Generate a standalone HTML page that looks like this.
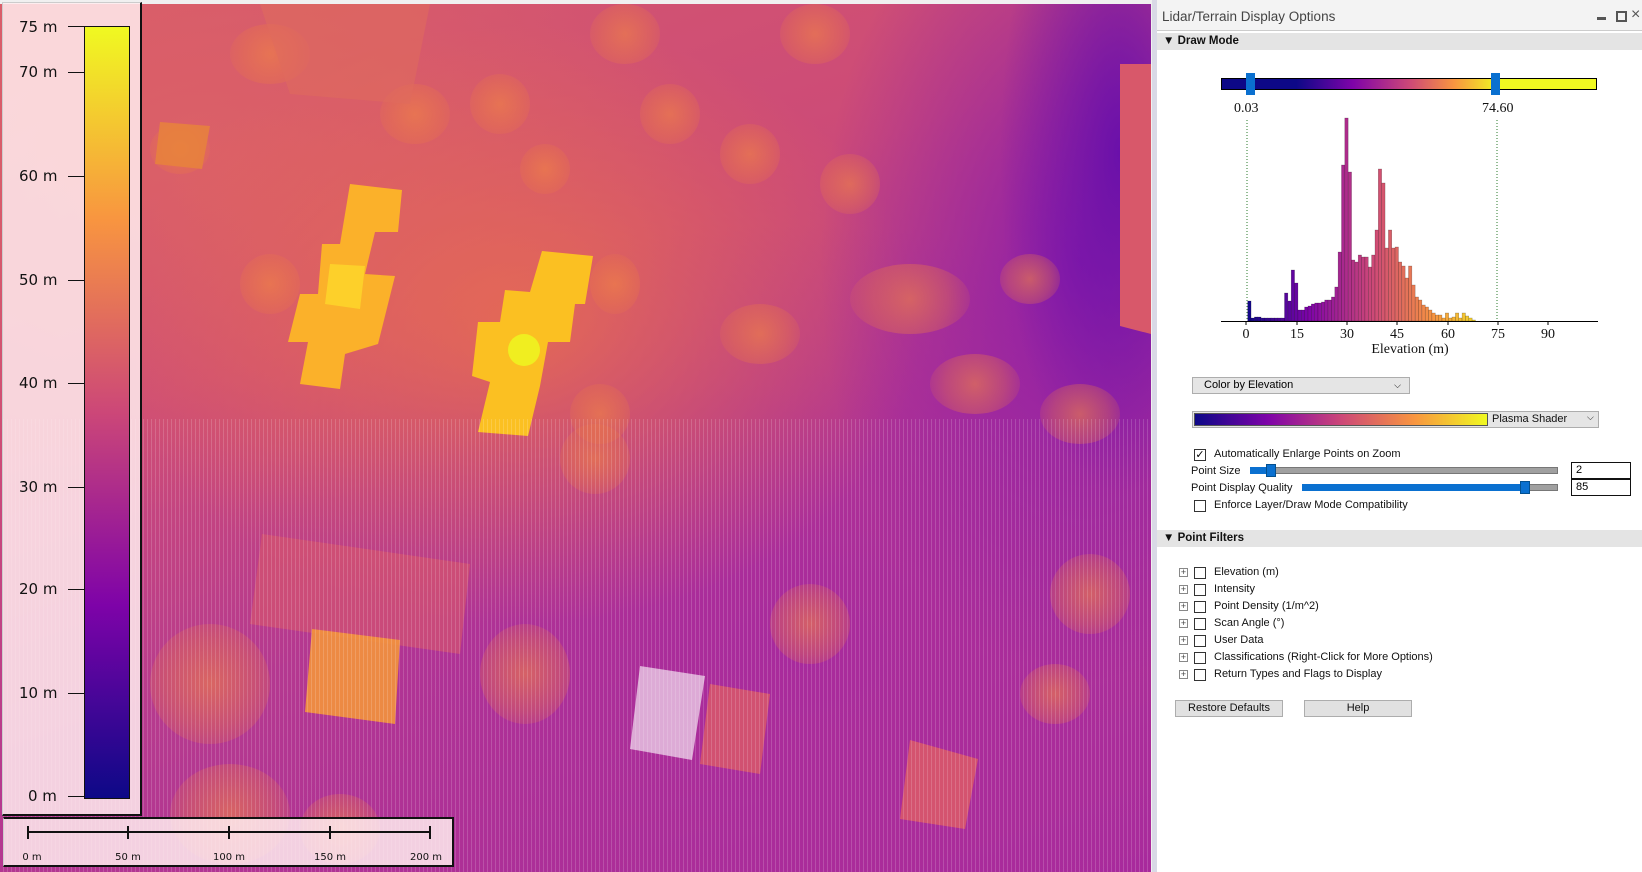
<!DOCTYPE html>
<html><head><meta charset="utf-8"><style>
*{margin:0;padding:0;box-sizing:border-box}
body{width:1642px;height:872px;overflow:hidden;background:#f0f0f0;font-family:"Liberation Sans",sans-serif;position:relative}
.abs{position:absolute}
#map{left:0;top:4px;width:1151px;height:868px;overflow:hidden;
background:
radial-gradient(ellipse 120px 340px at 1120px 150px,#6a10aa 0%,rgba(106,16,170,0) 100%),
radial-gradient(ellipse 260px 420px at 1080px 260px,#8e1ea8 0%,rgba(142,30,168,0) 100%),
radial-gradient(ellipse 400px 300px at 520px 320px,rgba(232,110,80,.85) 0%,rgba(232,110,80,0) 100%),
radial-gradient(ellipse 500px 360px at 200px 150px,rgba(222,100,100,.8) 0%,rgba(222,100,100,0) 100%),
radial-gradient(ellipse 600px 420px at 800px 640px,#a82a9c 0%,rgba(168,42,156,0) 100%),
linear-gradient(160deg,#d65a6c 0%,#cc4a78 35%,#b63a8e 60%,#a82a9c 100%);}
.tex{left:0;top:415px;width:1151px;height:460px;background:repeating-linear-gradient(90deg,rgba(255,255,255,0) 0 3px,rgba(255,255,255,.16) 3px 4px);}
.blob{position:absolute;border-radius:50%;background:radial-gradient(circle,rgba(240,130,70,.6) 0%,rgba(235,120,70,.35) 55%,rgba(235,120,70,0) 100%)}
.bld{position:absolute}
#legend{left:2px;top:2px;width:140px;height:814px;background:rgba(255,236,238,.85);border:2px solid #111;border-top:1px solid #ccc;border-left:1px solid #ccc}
#scale{left:3px;top:817px;width:451px;height:50px;background:rgba(255,236,238,.85);border:2px solid #111;border-left:1px solid #ccc}
.lab{position:absolute;font-size:15px;color:#111;font-family:"DejaVu Sans",sans-serif}
#panel{left:1152px;top:0;width:490px;height:872px;background:#fff;border-left:5px solid #d9d9e6}
.t12{font-size:11px;color:#111;position:absolute;white-space:nowrap}
.hdr{position:absolute;left:0;width:485px;height:17px;background:#e4e4e4;font-size:11.5px;font-weight:bold;color:#111;padding-left:6px;line-height:17px}
.cb{position:absolute;width:12px;height:12px;border:1px solid #333;background:#fff}
.pl{position:absolute;width:9px;height:9px;border:1px solid #888;font-size:9px;line-height:7px;text-align:center;color:#444}
.btn{position:absolute;height:17px;border:1px solid #adadad;background:#e1e1e1;font-size:11px;text-align:center;line-height:15px;color:#111}
</style></head><body>
<div id="map" class="abs">
 <div class="blob" style="left:150px;top:120px;width:60px;height:50px"></div>
 <div class="blob" style="left:470px;top:70px;width:60px;height:60px"></div>
 <div class="blob" style="left:520px;top:140px;width:50px;height:50px"></div>
 <div class="blob" style="left:590px;top:0px;width:70px;height:60px"></div>
 <div class="blob" style="left:640px;top:80px;width:60px;height:60px"></div>
 <div class="blob" style="left:720px;top:120px;width:60px;height:60px"></div>
 <div class="blob" style="left:780px;top:0px;width:70px;height:60px"></div>
 <div class="blob" style="left:820px;top:150px;width:60px;height:60px"></div>
 <div class="blob" style="left:380px;top:80px;width:70px;height:60px"></div>
 <div class="blob" style="left:230px;top:20px;width:80px;height:60px"></div>
 <div class="blob" style="left:590px;top:250px;width:50px;height:60px"></div>
 <div class="blob" style="left:570px;top:380px;width:60px;height:60px"></div>
 <div class="blob" style="left:560px;top:420px;width:70px;height:70px"></div>
 <div class="blob" style="left:850px;top:260px;width:120px;height:70px"></div>
 <div class="blob" style="left:930px;top:350px;width:90px;height:60px"></div>
 <div class="blob" style="left:1040px;top:380px;width:80px;height:60px"></div>
 <div class="blob" style="left:720px;top:300px;width:80px;height:60px"></div>
 <div class="blob" style="left:150px;top:620px;width:120px;height:120px"></div>
 <div class="blob" style="left:170px;top:760px;width:120px;height:100px"></div>
 <div class="blob" style="left:300px;top:790px;width:80px;height:70px"></div>
 <div class="blob" style="left:480px;top:620px;width:90px;height:100px"></div>
 <div class="blob" style="left:770px;top:580px;width:80px;height:80px"></div>
 <div class="blob" style="left:1050px;top:550px;width:80px;height:80px"></div>
 <div class="blob" style="left:1020px;top:660px;width:70px;height:60px"></div>
 <div class="blob" style="left:240px;top:250px;width:60px;height:60px"></div>
 <div class="blob" style="left:1000px;top:250px;width:60px;height:50px"></div>
 <div class="bld" style="left:0;top:0;width:1151px;height:868px">
 <svg width="1151" height="868" style="position:absolute;left:0;top:0">
  <polygon points="260,0 430,0 410,100 290,90" fill="#e06a5e" opacity=".6"/>
  <polygon points="160,118 210,122 202,165 155,160" fill="#e8833c" opacity=".85"/>
  <polygon points="350,180 402,186 398,228 375,228 365,270 395,272 378,340 345,350 340,385 300,380 308,338 288,338 300,290 318,290 322,240 340,240" fill="#fbb12a"/>
  <polygon points="330,260 365,262 360,305 325,300" fill="#fdd02a"/>
  <polygon points="542,247 593,252 585,300 575,300 570,338 548,338 540,382 528,432 478,428 490,378 472,372 478,318 500,318 505,286 530,288" fill="#fbc022"/>
  <circle cx="524" cy="346" r="16" fill="#f0ee20"/>
  <polygon points="262,530 470,560 460,650 250,620" fill="#d8586a" opacity=".6"/>
  <polygon points="312,625 400,636 395,720 305,708" fill="#f3933c" opacity=".9"/>
  <polygon points="640,662 705,672 692,756 630,745" fill="#ffffff" opacity=".6"/>
  <polygon points="710,680 770,690 760,770 700,760" fill="#d8586a" opacity=".85"/>
  <polygon points="910,736 978,755 965,825 900,815" fill="#d8586a" opacity=".9"/>
  <polygon points="1120,60 1151,60 1151,330 1120,322" fill="#d8586a"/>
 </svg></div>
 <div class="abs tex"></div>
</div>

<div id="legend" class="abs">
 <div class="abs" style="left:81px;top:23px;width:46px;height:773px;border:1px solid #111;background:linear-gradient(180deg,#f0f921 0%,#f89540 25%,#cc4778 50%,#7e03a8 75%,#0d0887 100%)"></div>
</div>
<svg class="abs" style="left:0;top:0" width="150" height="820">
 <g stroke="#111" stroke-width="1">
 <line x1="68" y1="26.5" x2="84" y2="26.5"/><line x1="68" y1="72.5" x2="84" y2="72.5"/><line x1="68" y1="176.5" x2="84" y2="176.5"/><line x1="68" y1="280.5" x2="84" y2="280.5"/><line x1="68" y1="383.5" x2="84" y2="383.5"/><line x1="68" y1="487.5" x2="84" y2="487.5"/><line x1="68" y1="589.5" x2="84" y2="589.5"/><line x1="68" y1="693.5" x2="84" y2="693.5"/><line x1="68" y1="796.5" x2="84" y2="796.5"/>
 </g>
</svg>
<div class="lab" style="left:19px;top:18px">75 m</div>
<div class="lab" style="left:19px;top:63px">70 m</div>
<div class="lab" style="left:19px;top:167px">60 m</div>
<div class="lab" style="left:19px;top:271px">50 m</div>
<div class="lab" style="left:19px;top:374px">40 m</div>
<div class="lab" style="left:19px;top:478px">30 m</div>
<div class="lab" style="left:19px;top:580px">20 m</div>
<div class="lab" style="left:19px;top:684px">10 m</div>
<div class="lab" style="left:28px;top:787px">0 m</div>

<div id="scale" class="abs"></div>
<svg class="abs" style="left:0;top:817px" width="460" height="50">
 <g stroke="#111" stroke-width="2"><line x1="28" y1="15" x2="430" y2="15"/>
 <line x1="28" y1="9" x2="28" y2="22"/><line x1="128" y1="9" x2="128" y2="22"/><line x1="229" y1="9" x2="229" y2="22"/><line x1="330" y1="9" x2="330" y2="22"/><line x1="430" y1="9" x2="430" y2="22"/></g>
 <g font-family="DejaVu Sans" font-size="10" fill="#111" text-anchor="middle"><text x="32" y="43">0 m</text><text x="128" y="43">50 m</text><text x="229" y="43">100 m</text><text x="330" y="43">150 m</text><text x="426" y="43">200 m</text></g>
</svg>

<div id="panel" class="abs">
 <div class="abs" style="left:0;top:0;width:485px;height:31px;background:#f3f3f3;border-bottom:1px solid #ccc"></div>
 <div class="abs" style="left:5px;top:9px;font-size:13.5px;color:#444">Lidar/Terrain Display Options</div>
 <div class="abs" style="left:440px;top:17px;width:9px;height:3px;background:#555"></div>
 <div class="abs" style="left:459px;top:11px;width:11px;height:11px;border:2px solid #555"></div>
 <div class="abs" style="left:474px;top:6px;font-size:16px;color:#555">×</div>
 <div class="hdr" style="top:33px">▼ Draw Mode</div>
 <div class="hdr" style="top:530px">▼ Point Filters</div>
</div>
<svg class="abs" style="left:1152px;top:0" width="490" height="360">
 <defs><linearGradient id="pg"><stop offset="0" stop-color="#0d0887"/><stop offset=".2" stop-color="#0d0887"/><stop offset=".35" stop-color="#7e03a8"/><stop offset=".5" stop-color="#cc4778"/><stop offset=".62" stop-color="#f89540"/><stop offset=".74" stop-color="#f0f921"/><stop offset="1" stop-color="#f0f921"/></linearGradient></defs>
 <rect x="69.5" y="78.5" width="375" height="11" fill="url(#pg)" stroke="#000"/>
 <rect x="94" y="73" width="9" height="22" fill="#0a70d0"/>
 <rect x="339" y="73" width="9" height="22" fill="#0a70d0"/>
 <g font-family="Liberation Serif" font-size="14" fill="#111"><text x="82" y="112">0.03</text><text x="330" y="112">74.60</text></g>
 <g stroke="#2a7a2a" stroke-dasharray="1,2"><line x1="95" y1="120" x2="95" y2="321"/><line x1="345" y1="120" x2="345" y2="321"/></g>
 <g id="bars"></g>
 <line x1="69" y1="321.5" x2="446" y2="321.5" stroke="#000"/>
 <g stroke="#000"><line x1="94" y1="321" x2="94" y2="325"/><line x1="145" y1="321" x2="145" y2="325"/><line x1="195" y1="321" x2="195" y2="325"/><line x1="245" y1="321" x2="245" y2="325"/><line x1="296" y1="321" x2="296" y2="325"/><line x1="346" y1="321" x2="346" y2="325"/><line x1="396" y1="321" x2="396" y2="325"/></g>
 <g font-family="Liberation Serif" font-size="14" fill="#111" text-anchor="middle"><text x="94" y="338">0</text><text x="145" y="338">15</text><text x="195" y="338">30</text><text x="245" y="338">45</text><text x="296" y="338">60</text><text x="346" y="338">75</text><text x="396" y="338">90</text><text x="258" y="353">Elevation (m)</text></g>
</svg>
<script>
var h={1:301,2:318,3:317,4:317,5:318,6:318,7:318,8:318,9:318,10:318,11:318,12:293,13:301,14:270,15:283,16:310,17:310,18:307,19:306,20:304,21:303,22:303,23:302,24:300,25:300,26:297,27:287,28:252,29:165,30:118,31:172,32:260,33:262,34:255,35:257,36:257,37:267,38:255,39:230,40:169,41:183,42:248,43:230,44:248,45:247,46:262,47:266,48:278,49:266,50:285,51:297,52:300,53:305,54:307,55:310,56:313,57:315,58:315,59:318,60:313,61:318,62:317,63:313,64:318,65:313,66:316,67:318,68:320};
var st=[[0,[13,8,135]],[.25,[126,3,168]],[.5,[204,71,120]],[.75,[248,149,64]],[1,[240,249,33]]];
function col(t){for(var i=0;i<4;i++){if(t<=st[i+1][0]){var a=st[i],b=st[i+1],f=(t-a[0])/(b[0]-a[0]);return 'rgb('+[0,1,2].map(function(k){return Math.round(a[1][k]+(b[1][k]-a[1][k])*f)}).join(',')+')';}}return 'rgb(240,249,33)';}
var s='';for(var v in h){var x=94+(v-0.5)*3.35,y=h[v];s+='<rect x="'+x.toFixed(1)+'" y="'+y+'" width="3.35" height="'+(321-y)+'" fill="'+col(v/75)+'" stroke="rgba(0,0,0,.35)" stroke-width=".5"/>';}
document.getElementById('bars').innerHTML=s;
</script>

<div class="abs" style="left:1192px;top:377px;width:218px;height:17px;border:1px solid #adadad;background:#e5e5e5;font-size:11px;line-height:15px;padding-left:11px">Color by Elevation<span style="position:absolute;right:8px;font-size:9px">⌵</span></div>
<div class="abs" style="left:1192px;top:411px;width:407px;height:17px;border:1px solid #adadad;background:#e5e5e5"></div>
<div class="abs" style="left:1194px;top:413px;width:294px;height:13px;border:1px solid #555;background:linear-gradient(90deg,#0d0887,#7e03a8 25%,#cc4778 50%,#f89540 75%,#f0f921)"></div>
<div class="t12" style="left:1492px;top:413px">Plasma Shader</div>
<div class="t12" style="left:1587px;top:412px;font-size:9px">⌵</div>

<div class="cb" style="left:1194px;top:449px;font-size:11px;line-height:10px;text-align:center">✓</div>
<div class="t12" style="left:1214px;top:448px">Automatically Enlarge Points on Zoom</div>
<div class="t12" style="left:1191px;top:465px">Point Size</div>
<div class="abs" style="left:1250px;top:467px;width:308px;height:7px;background:#a0a0a0;border:1px solid #777"></div>
<div class="abs" style="left:1250px;top:467px;width:20px;height:7px;background:#0a70d0"></div>
<div class="abs" style="left:1266px;top:464px;width:10px;height:13px;background:#0a70d0;border:1px solid #04508f"></div>
<div class="abs" style="left:1571px;top:462px;width:60px;height:17px;border:1px solid #111;font-size:11px;padding-left:4px;line-height:15px">2</div>
<div class="t12" style="left:1191px;top:482px">Point Display Quality</div>
<div class="abs" style="left:1302px;top:484px;width:256px;height:7px;background:#a0a0a0;border:1px solid #777"></div>
<div class="abs" style="left:1302px;top:484px;width:222px;height:7px;background:#0a70d0"></div>
<div class="abs" style="left:1520px;top:481px;width:10px;height:13px;background:#0a70d0;border:1px solid #04508f"></div>
<div class="abs" style="left:1571px;top:479px;width:60px;height:17px;border:1px solid #111;font-size:11px;padding-left:4px;line-height:15px">85</div>
<div class="cb" style="left:1194px;top:500px"></div>
<div class="t12" style="left:1214px;top:499px">Enforce Layer/Draw Mode Compatibility</div>

<div class="pl" style="left:1179px;top:568px">+</div><div class="cb" style="left:1194px;top:567px"></div><div class="t12" style="left:1214px;top:566px">Elevation (m)</div>
<div class="pl" style="left:1179px;top:585px">+</div><div class="cb" style="left:1194px;top:584px"></div><div class="t12" style="left:1214px;top:583px">Intensity</div>
<div class="pl" style="left:1179px;top:602px">+</div><div class="cb" style="left:1194px;top:601px"></div><div class="t12" style="left:1214px;top:600px">Point Density (1/m^2)</div>
<div class="pl" style="left:1179px;top:619px">+</div><div class="cb" style="left:1194px;top:618px"></div><div class="t12" style="left:1214px;top:617px">Scan Angle (°)</div>
<div class="pl" style="left:1179px;top:636px">+</div><div class="cb" style="left:1194px;top:635px"></div><div class="t12" style="left:1214px;top:634px">User Data</div>
<div class="pl" style="left:1179px;top:653px">+</div><div class="cb" style="left:1194px;top:652px"></div><div class="t12" style="left:1214px;top:651px">Classifications (Right-Click for More Options)</div>
<div class="pl" style="left:1179px;top:670px">+</div><div class="cb" style="left:1194px;top:669px"></div><div class="t12" style="left:1214px;top:668px">Return Types and Flags to Display</div>

<div class="btn" style="left:1175px;top:700px;width:108px">Restore Defaults</div>
<div class="btn" style="left:1304px;top:700px;width:108px">Help</div>
</body></html>
